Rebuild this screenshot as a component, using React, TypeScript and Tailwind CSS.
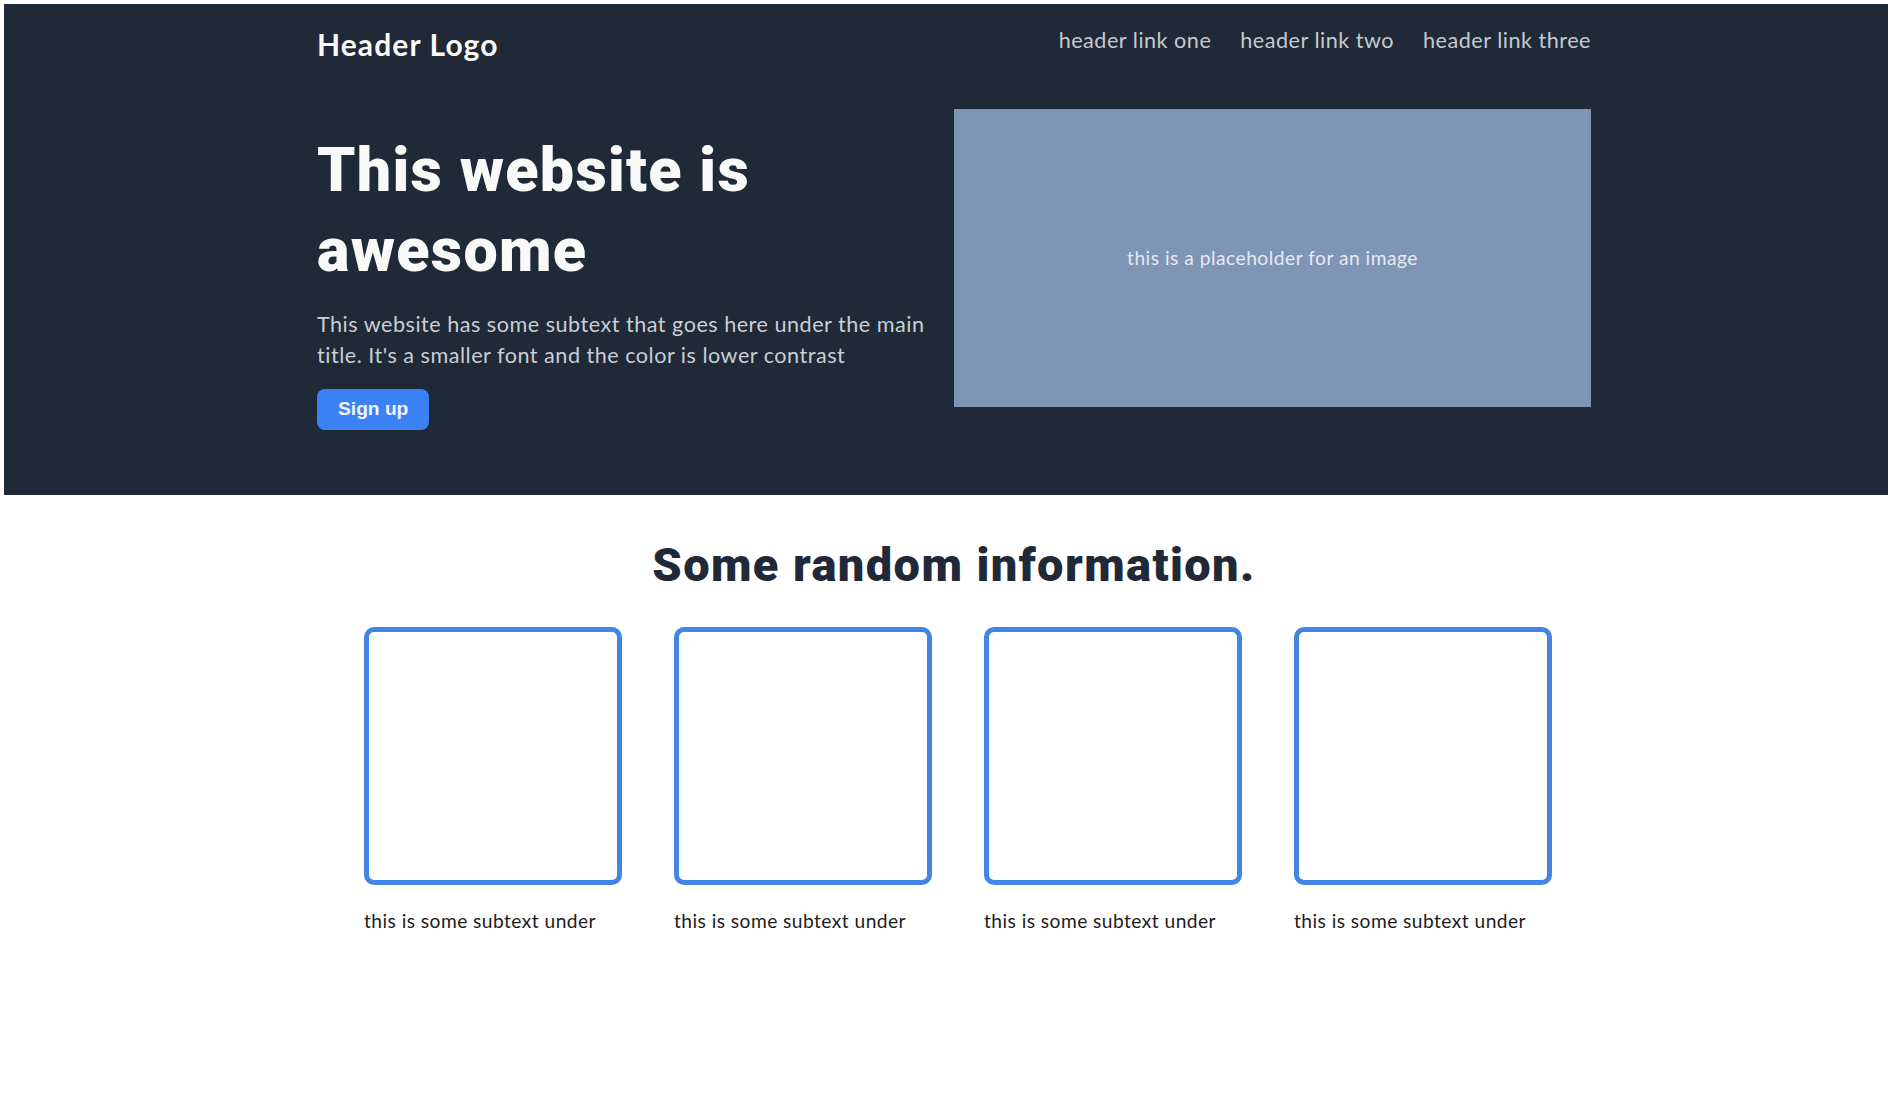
import React from "react";

const cards = [0, 1, 2, 3];

export default function App() {
  return (
    <div className="min-h-screen bg-white p-1 font-['Lato',sans-serif]">
      <div className="bg-[#1f2937]">
        <div className="ml-[313px] w-[1274px] pb-[65px] pt-[21px]">
          <header className="flex items-start justify-between">
            <div className="mt-[1px] text-[30px] font-bold leading-[36px] tracking-[1.1px] text-[#f9faf8]">
              Header Logo
            </div>
            <nav className="flex gap-[29px] text-[21.6px] leading-[30px] tracking-[0.5px] text-[#c5cad1]">
              <a href="#">header link one</a>
              <a href="#">header link two</a>
              <a href="#">header link three</a>
            </nav>
          </header>
          <section className="mt-[47px] flex items-start gap-[30px]">
            <div className="w-[607px]">
              <h1 className="mt-[21px] font-['Roboto',sans-serif] text-[61px] font-black leading-[80px] tracking-[1.3px] text-[#f9faf8]">
                This website is awesome
              </h1>
              <p className="mt-[19px] whitespace-nowrap text-[21.6px] leading-[30.5px] tracking-[0.5px] text-[#c9ced6]">
                This website has some subtext that goes here under the main
                <br />
                title. It's a smaller font and the color is lower contrast
              </p>
              <button className="mt-[19px] h-[41px] rounded-lg bg-[#3b82f6] px-[21px] font-['Liberation_Sans',Arial,sans-serif] text-[19.2px] font-bold text-[#f3f6ff]">
                Sign up
              </button>
            </div>
            <div className="flex h-[298px] w-[637px] items-center justify-center bg-[#7f95b5] text-[19.2px] tracking-[0.5px] text-[#e6eaf1]">
              this is a placeholder for an image
            </div>
          </section>
        </div>
      </div>
      <div className="ml-[313px] w-[1274px] pt-[44px]">
        <h2 className="text-center font-['Roboto',sans-serif] text-[47px] font-black leading-[52px] tracking-[1.4px] text-[#1f2937]">
          Some random information.
        </h2>
        <div className="mt-[36px] flex gap-[52px] pl-[47px]">
          {cards.map((i) => (
            <div key={i} className="w-[258px]">
              <div className="h-[258px] w-[258px] rounded-[10px] border-[5px] border-[#4285e4]" />
              <p className="mt-[23px] text-[19.2px] leading-[26px] tracking-[0.45px] text-[#1c1c1c]">
                this is some subtext under
              </p>
            </div>
          ))}
        </div>
      </div>
    </div>
  );
}
